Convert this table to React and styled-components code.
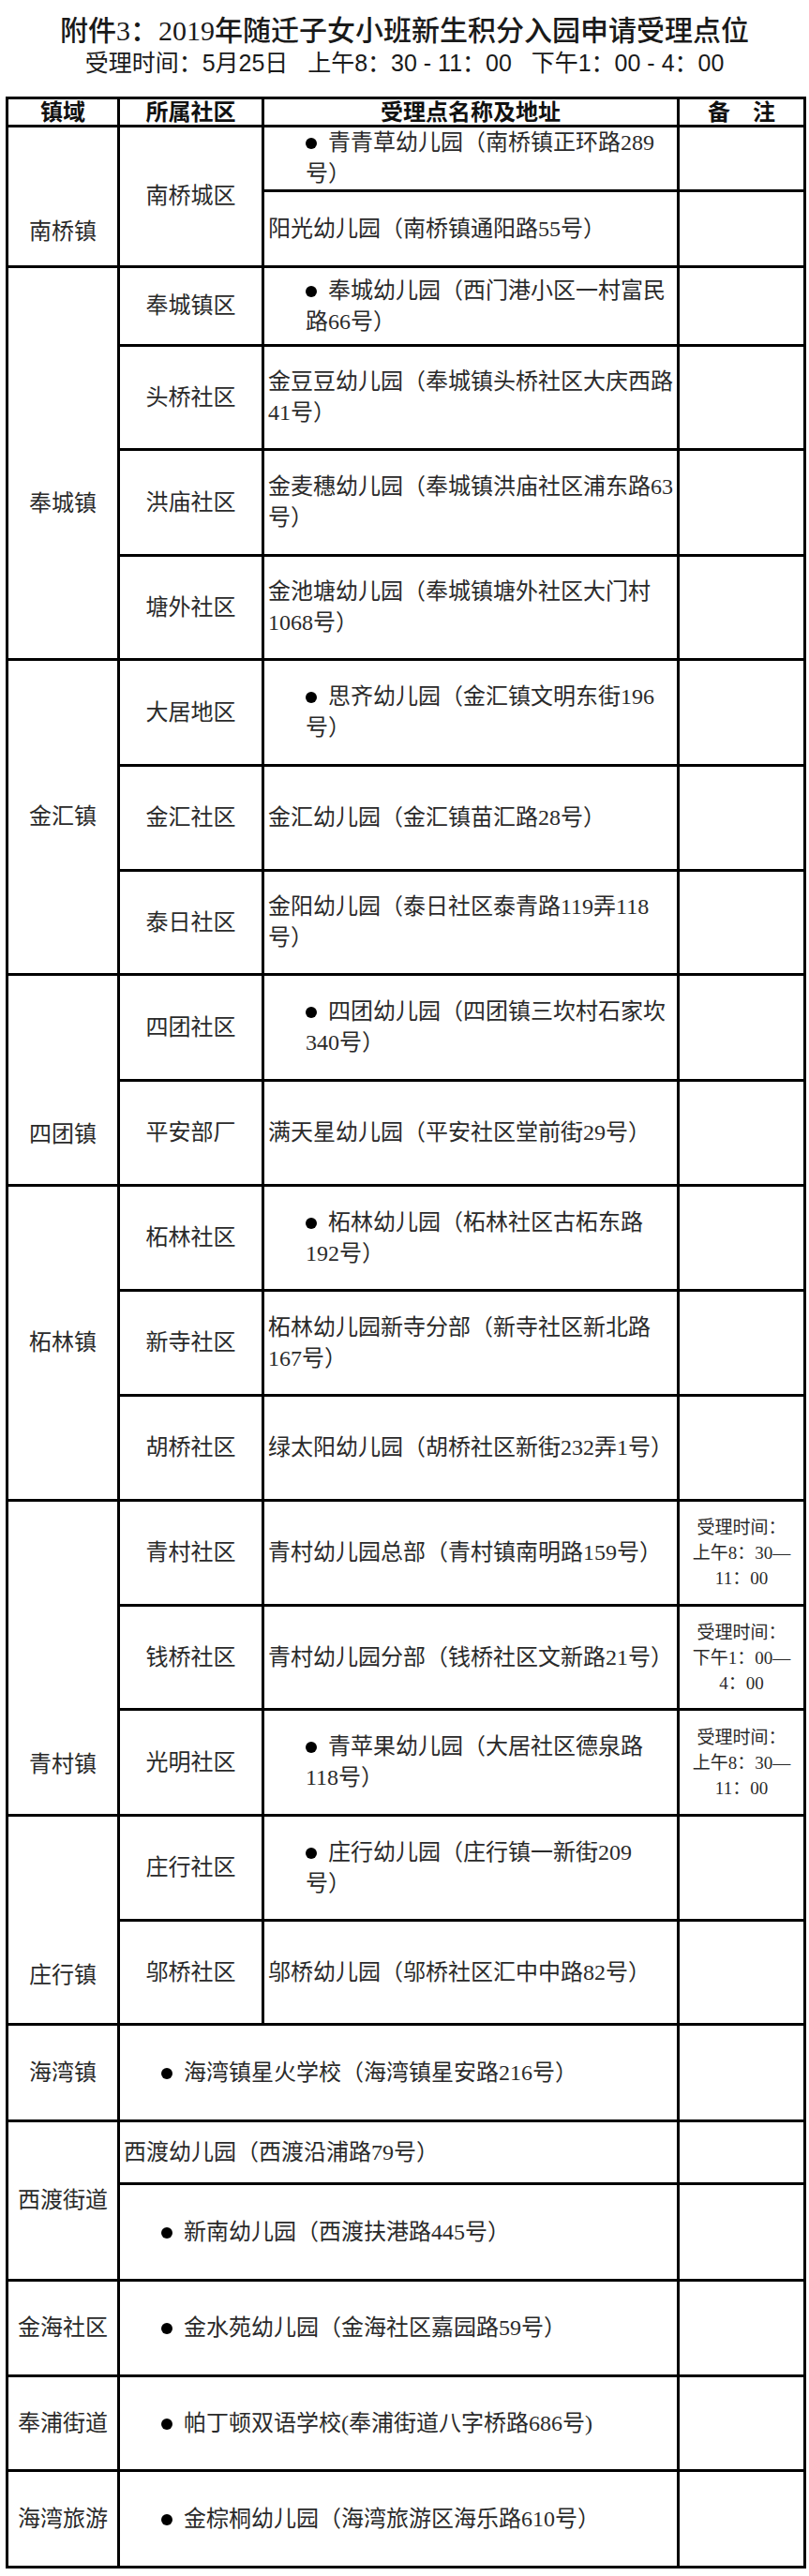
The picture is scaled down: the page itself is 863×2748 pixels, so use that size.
import React from 'react';
import styled, { createGlobalStyle } from 'styled-components';

const GlobalStyle = createGlobalStyle`
  body {
    margin: 0;
    background: #fff;
  }
`;

const Page = styled.div`
  width: 863px;
  padding-top: 15px;
  color: #222;
`;

const Title = styled.h1`
  margin: 0;
  text-align: center;
  font-family: 'Liberation Serif', 'Noto Sans CJK SC', serif;
  font-size: 30px;
  line-height: 36px;
  font-weight: 500;
  color: #1a1a1a;
`;

const SubTitle = styled.p`
  margin: 0 0 20px;
  text-align: center;
  font-family: 'Liberation Sans', 'Noto Sans CJK SC', sans-serif;
  font-size: 25px;
  line-height: 32px;
  color: #1a1a1a;
  white-space: pre;
`;

const Table = styled.table`
  border-collapse: collapse;
  table-layout: fixed;
  width: 851px;
  margin-left: 6px;
  font-family: 'Liberation Serif', 'Noto Sans CJK SC', serif;
  font-size: 24px;
  line-height: 33px;
  color: #2a2a2a;
`;

const Row = styled.tr`
  height: ${(p) => p.$h}px;
`;

const Cell = styled.td`
  border: 3px solid #000;
  padding: 0 4px;
  vertical-align: middle;
  white-space: nowrap;
`;

const HeadCell = styled(Cell)`
  text-align: center;
  font-weight: 700;
  line-height: 26px;
  color: #111;
`;

const TownCell = styled(Cell)`
  text-align: center;
  padding-top: ${(p) => p.$pad || 0}px;
`;

const AreaCell = styled(Cell)`
  text-align: center;
`;

const SiteCell = styled(Cell)`
  padding-left: ${(p) => (p.$bullet ? 44 : 4)}px;
`;

const NoteCell = styled(Cell)`
  text-align: center;
  padding: 0;
  font-size: 19px;
  line-height: 27px;
`;

const Line = styled.div``;

const Dot = styled.span`
  display: inline-block;
  width: 12px;
  height: 12px;
  margin-right: 12px;
  border-radius: 50%;
  background: #000;
  vertical-align: 1px;
`;

const rows = [
  { h: 69, town: ['南桥镇', 2, 76], area: ['南桥城区', 2], bullet: true, lines: ['青青草幼儿园（南桥镇正环路289', '号）'] },
  { h: 81, lines: ['阳光幼儿园（南桥镇通阳路55号）'] },
  { h: 84, town: ['奉城镇', 4, 87], area: ['奉城镇区'], bullet: true, lines: ['奉城幼儿园（西门港小区一村富民', '路66号）'] },
  { h: 111, area: ['头桥社区'], lines: ['金豆豆幼儿园（奉城镇头桥社区大庆西路', '41号）'] },
  { h: 113, area: ['洪庙社区'], lines: ['金麦穗幼儿园（奉城镇洪庙社区浦东路63', '号）'] },
  { h: 111, area: ['塘外社区'], lines: ['金池塘幼儿园（奉城镇塘外社区大门村', '1068号）'] },
  { h: 113, town: ['金汇镇', 3], area: ['大居地区'], bullet: true, lines: ['思齐幼儿园（金汇镇文明东街196', '号）'] },
  { h: 112, area: ['金汇社区'], lines: ['金汇幼儿园（金汇镇苗汇路28号）'] },
  { h: 111, area: ['泰日社区'], lines: ['金阳幼儿园（泰日社区泰青路119弄118', '号）'] },
  { h: 113, town: ['四团镇', 2, 117], area: ['四团社区'], bullet: true, lines: ['四团幼儿园（四团镇三坎村石家坎', '340号）'] },
  { h: 112, area: ['平安部厂'], lines: ['满天星幼儿园（平安社区堂前街29号）'] },
  { h: 112, town: ['柘林镇', 3], area: ['柘林社区'], bullet: true, lines: ['柘林幼儿园（柘林社区古柘东路', '192号）'] },
  { h: 112, area: ['新寺社区'], lines: ['柘林幼儿园新寺分部（新寺社区新北路', '167号）'] },
  { h: 112, area: ['胡桥社区'], lines: ['绿太阳幼儿园（胡桥社区新街232弄1号）'] },
  { h: 112, town: ['青村镇', 3, 228], area: ['青村社区'], lines: ['青村幼儿园总部（青村镇南明路159号）'], note: ['受理时间：', '上午8：30—', '11：00'] },
  { h: 111, area: ['钱桥社区'], lines: ['青村幼儿园分部（钱桥社区文新路21号）'], note: ['受理时间：', '下午1：00—', '4：00'] },
  { h: 113, area: ['光明社区'], bullet: true, lines: ['青苹果幼儿园（大居社区德泉路', '118号）'], note: ['受理时间：', '上午8：30—', '11：00'] },
  { h: 112, town: ['庄行镇', 2, 119], area: ['庄行社区'], bullet: true, lines: ['庄行幼儿园（庄行镇一新街209', '号）'] },
  { h: 111, area: ['邬桥社区'], lines: ['邬桥幼儿园（邬桥社区汇中中路82号）'] },
  { h: 103, town: ['海湾镇', 1], wide: true, bullet: true, lines: ['海湾镇星火学校（海湾镇星安路216号）'] },
  { h: 67, town: ['西渡街道', 2], wide: true, lines: ['西渡幼儿园（西渡沿浦路79号）'] },
  { h: 103, wide: true, bullet: true, lines: ['新南幼儿园（西渡扶港路445号）'] },
  { h: 102, town: ['金海社区', 1], wide: true, bullet: true, lines: ['金水苑幼儿园（金海社区嘉园路59号）'] },
  { h: 101, town: ['奉浦街道', 1], wide: true, bullet: true, lines: ['帕丁顿双语学校(奉浦街道八字桥路686号)'] },
  { h: 103, town: ['海湾旅游', 1], wide: true, bullet: true, lines: ['金棕桐幼儿园（海湾旅游区海乐路610号）'] },
];

const SiteText = ({ bullet, lines }) =>
  lines.map((text, i) => (
    <Line key={i}>
      {bullet && i === 0 && <Dot />}
      {text}
    </Line>
  ));

export default function App() {
  return (
    <Page>
      <GlobalStyle />
      <Title>附件3：2019年随迁子女小班新生积分入园申请受理点位</Title>
      <SubTitle>{'受理时间：5月25日   上午8：30 - 11：00   下午1：00 - 4：00'}</SubTitle>
      <Table>
        <colgroup>
          <col style={{ width: 119 }} />
          <col style={{ width: 154 }} />
          <col style={{ width: 443 }} />
          <col style={{ width: 135 }} />
        </colgroup>
        <tbody>
          <Row $h={30}>
            <HeadCell>镇域</HeadCell>
            <HeadCell>所属社区</HeadCell>
            <HeadCell>受理点名称及地址</HeadCell>
            <HeadCell>备　注</HeadCell>
          </Row>
          {rows.map((r, i) => (
            <Row key={i} $h={r.h}>
              {r.town && (
                <TownCell rowSpan={r.town[1]} $pad={r.town[2]}>
                  {r.town[0]}
                </TownCell>
              )}
              {r.area && <AreaCell rowSpan={r.area[1] || 1}>{r.area[0]}</AreaCell>}
              <SiteCell colSpan={r.wide ? 2 : 1} $bullet={r.bullet}>
                <SiteText bullet={r.bullet} lines={r.lines} />
              </SiteCell>
              <NoteCell>
                {r.note && r.note.map((t, j) => <Line key={j}>{t}</Line>)}
              </NoteCell>
            </Row>
          ))}
        </tbody>
      </Table>
    </Page>
  );
}
